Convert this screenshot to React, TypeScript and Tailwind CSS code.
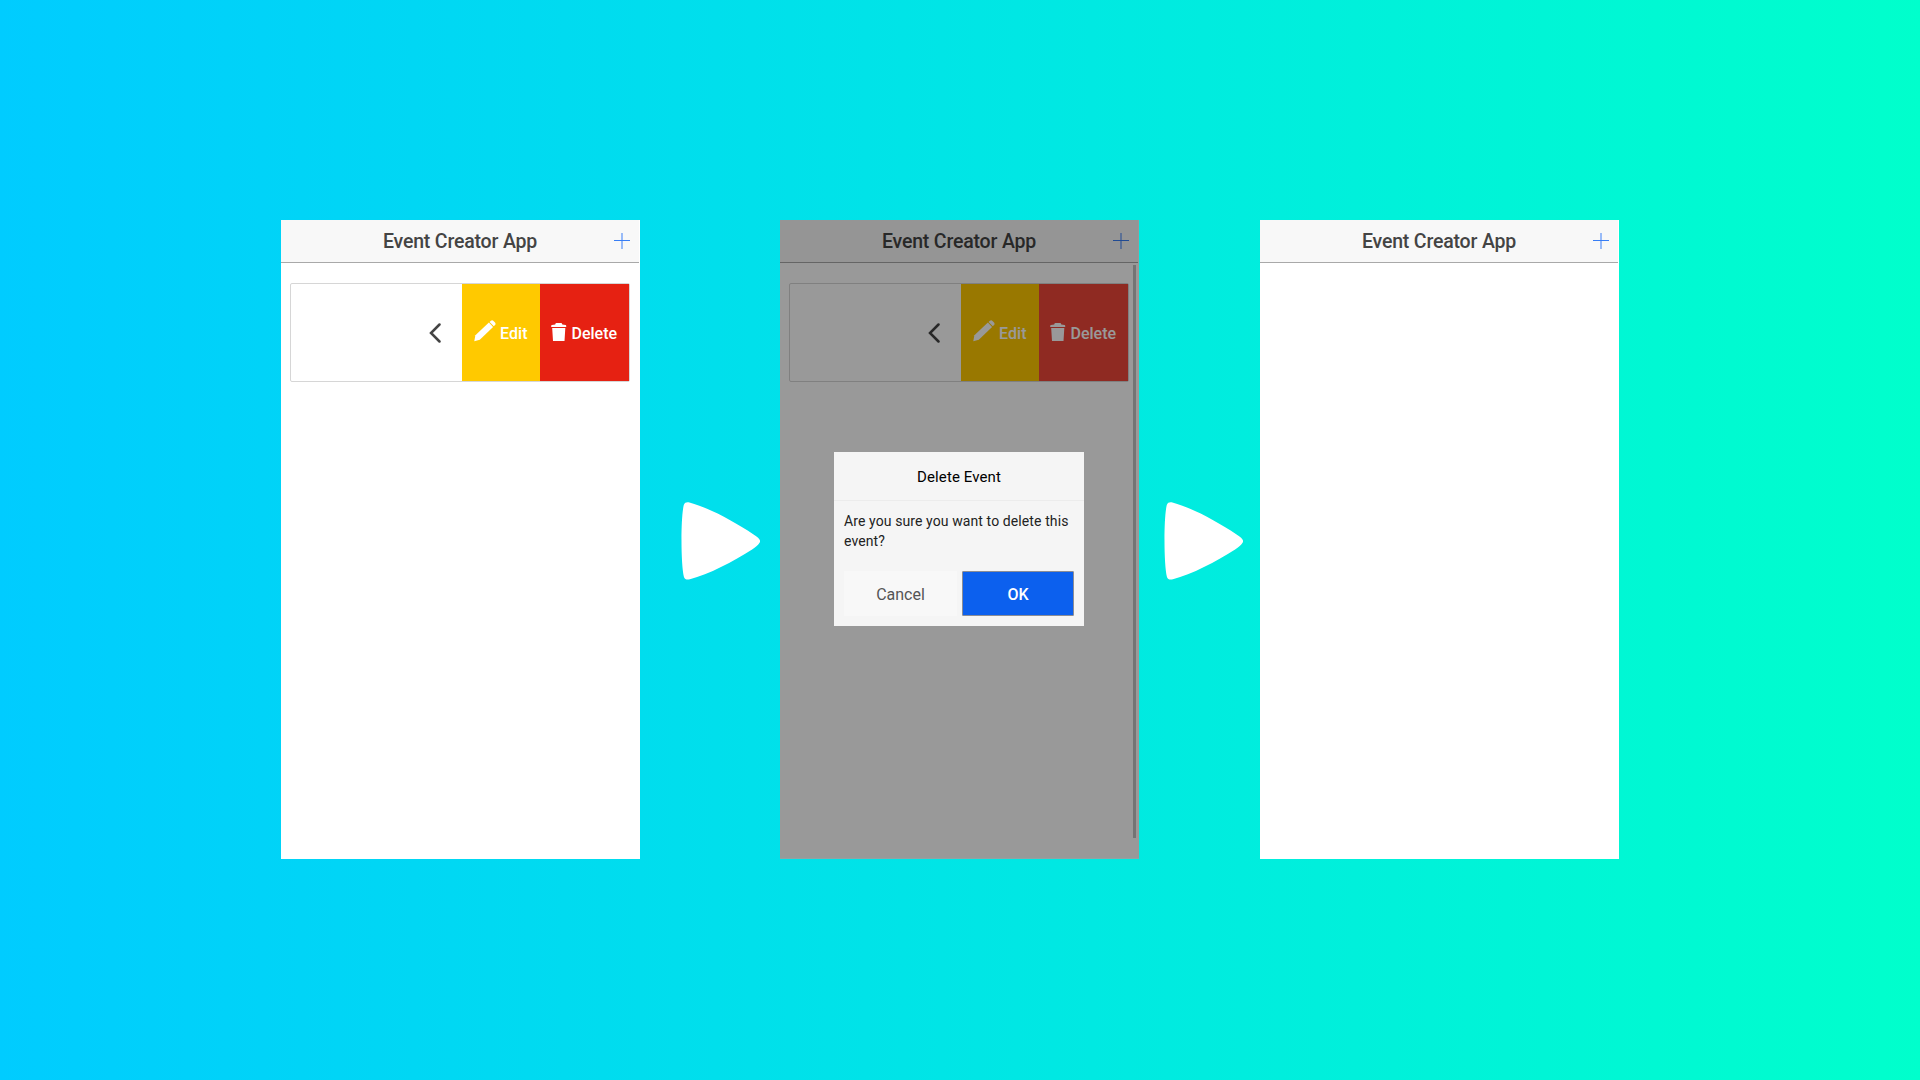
import type { ReactNode } from "react";

function Header() {
  return (
    <header className="relative flex h-[43px] w-[358px] items-center justify-center border-b border-[#a9a9a9] bg-[#f8f8f8]">
      <h1 className="pt-px text-[19.5px] leading-[42px] font-medium tracking-[-0.18px] text-[#444]">Event Creator App</h1>
      <svg className="absolute top-[13px] right-[9px]" width="16" height="16" shapeRendering="crispEdges">
        <rect x="7" y="0" width="2" height="16" fill="#98bbf8" />
        <rect x="0" y="7" width="16" height="1" fill="#387ef5" />
      </svg>
    </header>
  );
}

function Phone({ children }: { children?: ReactNode }) {
  return (
    <section className="relative h-[639px] w-[359px] shrink-0 bg-white">
      <Header />
      {children}
    </section>
  );
}

function EventCard({ deleteClass }: { deleteClass: string }) {
  return (
    <div className="mt-5 ml-[9px] flex h-[99px] w-[340px] rounded-[2px] border border-[#d6d6d6] text-[16px] font-medium text-white">
      <div className="flex flex-1 items-center justify-end pr-[21px]">
        <svg width="12" height="20" viewBox="0 0 12 20" fill="none" stroke="#444" strokeWidth="2.5">
          <path d="M10.5 1.5L2 10L10.5 18.5" strokeLinecap="round" />
        </svg>
      </div>
      <div className="flex w-[78px] items-center bg-[#ffc900] pl-[11.5px]">
        <svg width="22" height="22" viewBox="0 0 22 22" fill="white" className="mt-[-3px]">
          <path d="M1.4 15.2L14.9 2.6L19.1 6.9L5.8 19.7L0.3 21.3Z" />
          <path d="M15.6 1.9L16.9 0.8Q18.2-.2 19.5 1L21 2.6Q22.2 3.9 21 5.1L19.8 6.2Z" />
        </svg>
        <span className="ml-[4.5px] pt-[2px] tracking-[0.1px]">Edit</span>
      </div>
      <div className={deleteClass}>
        <svg width="16" height="18" viewBox="0 0 16 18" fill="white" className="mt-[-2px]">
          <path d="M0.2 4V2.9Q.2 2.2 1 2.1L4.2 1.5Q4.5.1 5.5.1H10Q11 .1 11.3 1.5L14.6 2.1Q15.2 2.2 15.2 2.9V4Z" />
          <path d="M1.2 5H14.3L13.5 18H2Z" />
        </svg>
        <span className="ml-[4.5px] pt-[2px]">Delete</span>
      </div>
    </div>
  );
}

function Arrow() {
  return (
    <svg className="shrink-0" width="79" height="80" viewBox="0 0 80 80" preserveAspectRatio="none" fill="white">
      <path d="M2.8 4C3.8 1.4 5.8 1 8.5 1.5C28 6.5 54 20.5 73.5 33.5C79 37 81 39 79.7 41.5C78.5 44 75.5 46 72 48.5C53 60.5 28 73.5 9 78.2C6 79 4 78.5 3 76C-.2 64 -.4 17 2.8 4Z" />
    </svg>
  );
}

function DeleteDialog() {
  return (
    <div className="absolute top-[232px] left-[54px] flex h-[174px] w-[250px] flex-col bg-[#f5f5f5]">
      <h2 className="h-[49px] border-b border-[#ececec] text-center text-[15px] leading-[50px] font-normal tracking-[0.1px] text-black">
        Delete Event
      </h2>
      <p className="h-[70px] pt-[10px] pl-[10px] text-[14px] leading-[20px] tracking-[0.1px] text-[#222]">
        Are you sure you want to delete this
        <br />
        event?
      </p>
      <div className="flex h-[45px] gap-[5px] px-[10px] text-[16px]">
        <button className="w-[113px] bg-[#f8f8f8] pt-[2px] text-[#555]">Cancel</button>
        <button className="w-[112px] rounded-[1px] border border-[#8b8d95] bg-[#0c60ee] pt-[2px] font-medium text-white">
          OK
        </button>
      </div>
    </div>
  );
}

export default function App() {
  return (
    <main className="flex h-[1080px] w-[1920px] items-start bg-[linear-gradient(to_right,#00ccff,#00ffcc)] pt-[220px] pl-[281px] font-['Roboto',sans-serif]">
      <Phone>
        <EventCard deleteClass="flex w-[89px] items-center bg-[#e62112] pl-[11px]" />
      </Phone>
      <div className="flex h-[641px] w-[140px] items-center pl-[41px]">
        <Arrow />
      </div>
      <Phone>
        <EventCard deleteClass="flex w-[89px] items-center bg-[#ef473a] pl-[11px]" />
        <div className="absolute inset-x-0 top-0 h-[638px] bg-black/40" />
        <div className="absolute inset-x-0 bottom-0 h-px bg-[#8fa5a4]" />
        <div className="absolute top-[45px] right-[3px] h-[573px] w-[3px] bg-[#747474]" />
        <DeleteDialog />
      </Phone>
      <div className="flex h-[641px] w-[121px] items-center pl-[25px]">
        <Arrow />
      </div>
      <Phone />
    </main>
  );
}
